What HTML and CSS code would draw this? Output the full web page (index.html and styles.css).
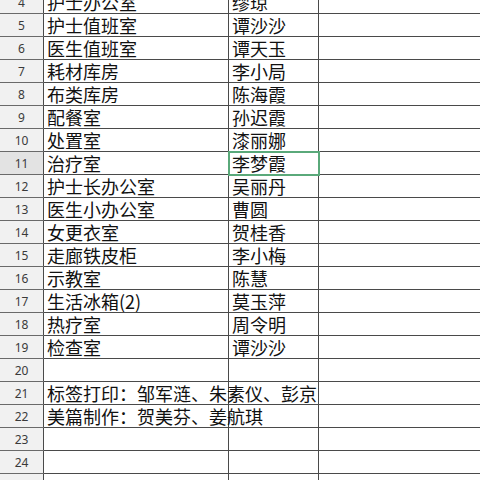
FILE: index.html
```html
<!DOCTYPE html>
<html lang="zh">
<head>
<meta charset="utf-8">
<link rel="stylesheet" href="styles.css">
</head>
<body>
<table class="sheet">
  <colgroup>
    <col class="c-hd"><col class="c-b"><col class="c-c"><col class="c-d">
  </colgroup>
  <tbody>
    <tr><td class="hd">4</td><td>护士办公室</td><td>缪琼</td><td></td></tr>
    <tr><td class="hd">5</td><td>护士值班室</td><td>谭沙沙</td><td></td></tr>
    <tr><td class="hd">6</td><td>医生值班室</td><td>谭天玉</td><td></td></tr>
    <tr><td class="hd">7</td><td>耗材库房</td><td>李小局</td><td></td></tr>
    <tr><td class="hd">8</td><td>布类库房</td><td>陈海霞</td><td></td></tr>
    <tr><td class="hd">9</td><td>配餐室</td><td>孙迟霞</td><td></td></tr>
    <tr><td class="hd">10</td><td>处置室</td><td>漆丽娜</td><td></td></tr>
    <tr><td class="hd hd-sel">11</td><td>治疗室</td><td class="sel">李梦霞</td><td></td></tr>
    <tr><td class="hd">12</td><td>护士长办公室</td><td>吴丽丹</td><td></td></tr>
    <tr><td class="hd">13</td><td>医生小办公室</td><td>曹圆</td><td></td></tr>
    <tr><td class="hd">14</td><td>女更衣室</td><td>贺桂香</td><td></td></tr>
    <tr><td class="hd">15</td><td>走廊铁皮柜</td><td>李小梅</td><td></td></tr>
    <tr><td class="hd">16</td><td>示教室</td><td>陈慧</td><td></td></tr>
    <tr><td class="hd">17</td><td>生活冰箱(2)</td><td>莫玉萍</td><td></td></tr>
    <tr><td class="hd">18</td><td>热疗室</td><td>周令明</td><td></td></tr>
    <tr><td class="hd">19</td><td>检查室</td><td>谭沙沙</td><td></td></tr>
    <tr><td class="hd">20</td><td></td><td></td><td></td></tr>
    <tr><td class="hd">21</td><td class="over">标签打印：邹军涟、朱素仪、彭京</td><td></td><td></td></tr>
    <tr><td class="hd">22</td><td class="over">美篇制作：贺美芬、姜航琪</td><td></td><td></td></tr>
    <tr><td class="hd">23</td><td></td><td></td><td></td></tr>
    <tr><td class="hd">24</td><td></td><td></td><td></td></tr>
    <tr><td class="hd">25</td><td></td><td></td><td></td></tr>
  </tbody>
</table>
</body>
</html>
```
FILE: styles.css
```css
html, body {
  margin: 0;
  padding: 0;
  background: #ffffff;
  overflow: hidden;
  width: 480px;
  height: 480px;
}

.sheet {
  border-collapse: collapse;
  table-layout: fixed;
  width: 560px;
  margin-top: -10px;
  margin-left: -1px;
  font-family: "Noto Sans CJK SC", "Noto Sans", sans-serif;
  color: #111;
}

.c-hd { width: 44px; }
.c-b { width: 185px; }
.c-c { width: 90px; }
.c-d { width: 241px; }

.sheet td {
  height: 23px;
  padding: 1px 0 0 3px;
  border: 1px solid #4a4a4a;
  font-size: 18px;
  line-height: 20px;
  vertical-align: top;
  white-space: nowrap;
  overflow: visible;
  box-sizing: border-box;
}

.sheet td.hd {
  background: #f1f1f1;
  color: #3a3a3a;
  font-family: "Noto Sans", "Noto Sans CJK SC", sans-serif;
  font-size: 12px;
  line-height: 20px;
  text-align: center;
  padding: 1px 0 0 0;
  vertical-align: middle;
  border-color: #6a6a6a #4a4a4a #6a6a6a #b9b9b9;
}

.sheet td.hd-sel {
  background: #e3e3e3;
}

.sheet td.sel {
  outline: 2px solid #5aa97a;
  outline-offset: -1px;
}
```
